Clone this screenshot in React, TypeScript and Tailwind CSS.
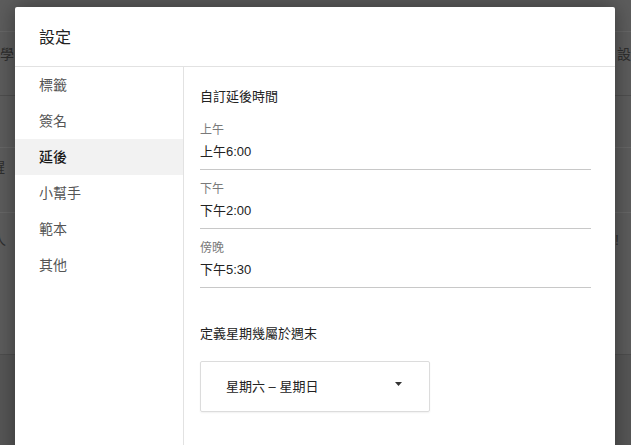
const cjk = "font-['Liberation_Sans','Noto_Sans_CJK_TC',sans-serif]";

const navItems = ["標籤", "簽名", "延後", "小幫手", "範本", "其他"];

const snoozeFields = [
  { label: "上午", value: "上午6:00" },
  { label: "下午", value: "下午2:00" },
  { label: "傍晚", value: "下午5:30" },
];

function Backdrop() {
  return (
    <div className="flex h-full flex-col text-[14px] leading-5 text-[#2e2e2e]">
      <div className="h-[32px] border-b border-[#676767]" />
      <div className="flex h-[64px] items-start justify-between border-b border-[#4f4f4f] pt-[12px]">
        <span className="-ml-[14px]">同學</span>
        <span className="-mr-[14px]">設定</span>
      </div>
      <div className="h-[52px] border-b border-[#676767]" />
      <div className="flex h-[65px] items-start border-b border-[#676767] pt-[9px]">
        <span className="-ml-[9px]">醒</span>
      </div>
      <div className="flex h-[142px] items-start justify-between border-b border-[#4e4e4e] pt-[17px]">
        <span className="-ml-[8px]">人</span>
        <span className="mr-[12px]">· !</span>
      </div>
      <div className="flex-1 bg-[#575757]" />
    </div>
  );
}

function Field({ label, value }: { label: string; value: string }) {
  return (
    <div className="mt-[11px] border-b border-[#c8c8c8] pb-[7px] first:mt-[15px]">
      <div className="h-4 text-[12px] leading-4 text-[#7a7a7a]">{label}</div>
      <div className="mt-1 h-5 text-[13px] leading-5 text-[#222]">{value}</div>
    </div>
  );
}

export default function App() {
  return (
    <div className={`relative h-[445px] w-[631px] overflow-hidden bg-[#5d5d5d] ${cjk}`}>
      <Backdrop />

      <div className="absolute left-[15px] top-[7px] h-[460px] w-[600px] rounded-t-[2px] bg-white shadow-[0_0_22px_rgba(0,0,0,0.4)]">
        {/* Header */}
        <div className="flex h-[60px] items-center border-b border-[#e2e2e2] px-6 pt-[3px] text-[16px] text-[#222]">
          設定
        </div>

        <div className="flex h-[400px]">
          {/* Sidebar */}
          <div className="w-[169px] border-r border-[#e2e2e2]">
            {navItems.map((item) => (
              <div
                key={item}
                className={
                  item === "延後"
                    ? "flex h-9 items-center bg-[#f2f2f2] pl-6 text-[14px] font-medium text-[#1a1a1a]"
                    : "flex h-9 items-center pl-6 text-[14px] text-[#555]"
                }
              >
                {item}
              </div>
            ))}
          </div>

          {/* Content */}
          <div className="flex-1 pl-4 pr-6 pt-5">
            <div className="h-5 text-[13px] leading-5 text-[#222]">自訂延後時間</div>

            <div>
              {snoozeFields.map((f) => (
                <Field key={f.label} label={f.label} value={f.value} />
              ))}
            </div>

            <div className="mt-[36px] h-5 text-[13px] leading-5 text-[#222]">定義星期幾屬於週末</div>

            <div className="mt-[17px] flex h-[51px] w-[230px] items-center justify-between rounded-[2px] border border-[#dcdcdc] pl-[25px] pr-[27px] text-[13px] text-[#222] shadow-[0_1px_2px_rgba(0,0,0,0.06)]">
              <span>星期六 – 星期日</span>
              <svg width="7" height="4" viewBox="0 0 7 4" className="-mt-[5px]">
                <path d="M0 0h7L3.5 4z" fill="#333" />
              </svg>
            </div>
          </div>
        </div>
      </div>
    </div>
  );
}
